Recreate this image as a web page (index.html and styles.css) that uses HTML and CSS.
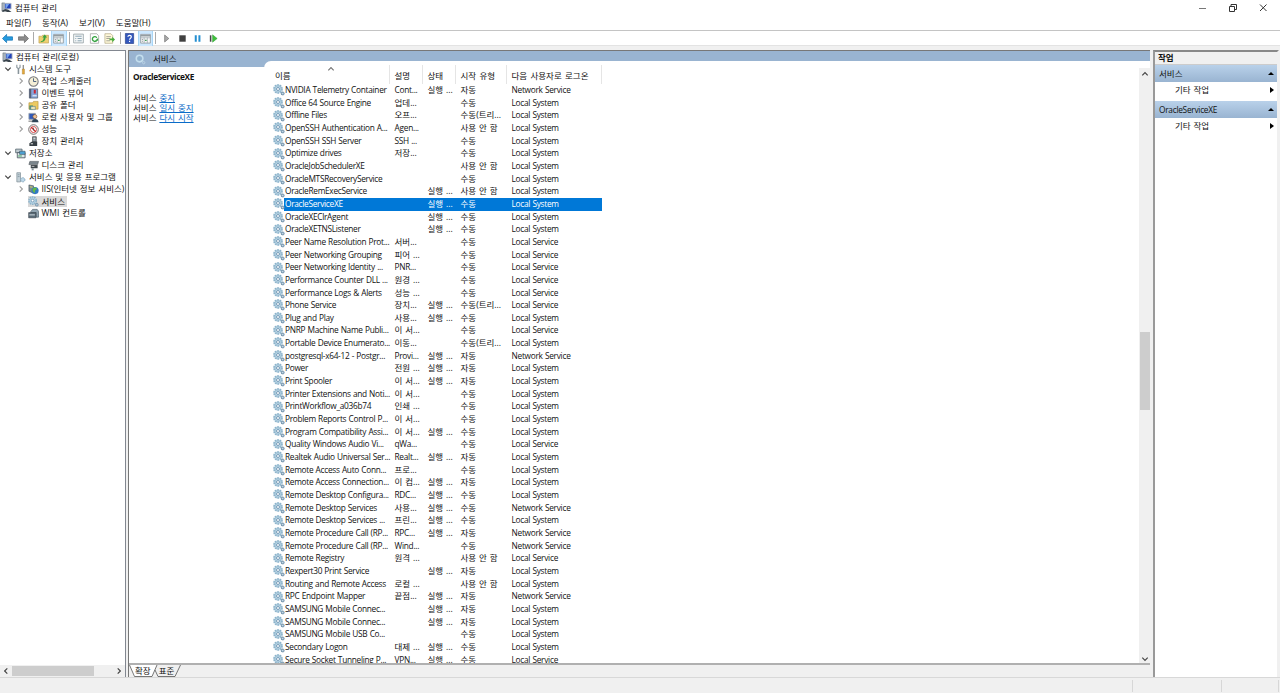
FILE: index.html
```html
<!DOCTYPE html>
<html lang="ko">
<head>
<meta charset="utf-8">
<title>컴퓨터 관리</title>
<link rel="stylesheet" href="styles.css">
</head>
<body>
<svg class="defs" width="0" height="0">
  <symbol id="gear" viewBox="0 0 12 12">
    <circle cx="5" cy="5" r="4" fill="#cfe6f3" stroke="#8cb3cb" stroke-width="1.700" stroke-dasharray="1.800 .7"/>
    <circle cx="5" cy="5" r="2.900" fill="#c8e2f0" stroke="#92b6cc" stroke-width=".7"/>
    <circle cx="5" cy="5" r="1.500" fill="#fff" stroke="#5f88a8" stroke-width=".8"/>
    <path d="M8 8h2.500v3H8z" fill="#9db8cb"/>
    <circle cx="9.700" cy="9.500" r="1.600" fill="#8fadc2" stroke="#6e8ca4" stroke-width=".9" stroke-dasharray="1 .5"/>
    <circle cx="9.700" cy="9.500" r=".6" fill="#d8e8f3"/>
  </symbol>
  <symbol id="gearlight" viewBox="0 0 12 12">
    <circle cx="5" cy="5" r="3.600" fill="none" stroke="#c3deed" stroke-width="1.700"/>
    <circle cx="5" cy="5" r="1.900" fill="#91b4ce"/>
    <circle cx="9.500" cy="9.500" r="1.300" fill="none" stroke="#bdd6e7" stroke-width=".9"/>
  </symbol>
  <symbol id="computer" viewBox="0 0 12 12">
    <path d="M1 1h3v9H1z" fill="#a8b3bb" stroke="#66727c" stroke-width=".6"/>
    <path d="M4 1.500h7v6H4z" fill="#2343b8" stroke="#b3bac2" stroke-width=".9"/>
    <path d="M5 2.300h4L6 6.500H5z" fill="#75a3ee"/>
    <path d="M1 9.500l4-2 3 1 3.500 2.500H7L4 10l-2 1z" fill="#39434c"/>
  </symbol>
  <symbol id="tools" viewBox="0 0 12 12">
    <path d="M2 .8v3l1.500 1.200v6M5.500 .8v3L4 5v6" fill="none" stroke="#88949b" stroke-width="1.200"/>
    <path d="M9 1v6" stroke="#777" stroke-width="1.200"/>
    <path d="M8 5.500h2.300V11H8z" fill="#e4a93c" stroke="#9b6d19" stroke-width=".4"/>
  </symbol>
  <symbol id="clock" viewBox="0 0 12 12">
    <circle cx="6" cy="6" r="5.100" fill="#f4eed5" stroke="#6f7278" stroke-width="1.100"/>
    <path d="M6 2.500V6h3" fill="none" stroke="#435b7c" stroke-width="1"/>
  </symbol>
  <symbol id="event" viewBox="0 0 12 12">
    <path d="M1.500 1h9v10h-9z" fill="#86a6dc" stroke="#53606e" stroke-width=".8"/>
    <path d="M1.500 1h2v10h-2z" fill="#595f72"/>
    <path d="M6.300 2H8.500v4H6.300z" fill="#c82936"/><path d="M5 8.500h4.500" stroke="#fff"/>
  </symbol>
  <symbol id="folder" viewBox="0 0 12 12">
    <path d="M1 3h4l1-1.500h5V10H1z" fill="#ecca61" stroke="#ad8731" stroke-width=".6"/>
    <path d="M1.500 6h4v4.500h-4z" fill="#3c8a72"/><path d="M3 7h5v3.500H3z" fill="#e9e2b4" stroke="#4c7b92" stroke-width=".6"/>
  </symbol>
  <symbol id="users" viewBox="0 0 12 12">
    <path d="M1 1.500h7v6.500H1z" fill="#3159b8" stroke="#9aa4b0"/>
    <circle cx="7.500" cy="5" r="2.200" fill="#edc398" stroke="#78451d" stroke-width=".6"/>
    <path d="M4 11.300c0-5 7.500-5 7.500 0z" fill="#2f4558"/><path d="M.5 10H5" stroke="#666"/>
  </symbol>
  <symbol id="noentry" viewBox="0 0 12 12">
    <circle cx="6" cy="6" r="5.200" fill="#fff" stroke="#5b5050" stroke-width=".9"/>
    <circle cx="6" cy="6" r="3.300" fill="none" stroke="#ce3d3d" stroke-width="1"/>
    <path d="M3.500 3.500l5 5" stroke="#c62626" stroke-width="1.300"/><path d="M6 4v3" stroke="#444" stroke-width=".8"/>
  </symbol>
  <symbol id="device" viewBox="0 0 12 12">
    <path d="M5 .8h4v5.500H5z" fill="#8a979f" stroke="#333" stroke-width=".7"/>
    <path d="M1.500 8l3-2H10v5H1.500z" fill="#353d42"/><path d="M3 8.500h2.500" stroke="#eee"/><path d="M6 2.500h2" stroke="#e8e8e8"/>
  </symbol>
  <symbol id="storage" viewBox="0 0 12 12">
    <path d="M.7 1.200h7v4h-7z" fill="#c0cbd0" stroke="#4c5d65" stroke-width=".8"/>
    <path d="M2.500 5H11v5.700H2.500z" fill="#dfe6e9" stroke="#46545c" stroke-width=".9"/>
    <path d="M5 3.500h6V7H5z" fill="#4fa3d4" stroke="#3b4b55" stroke-width=".6"/><path d="M3.500 8.700h4" stroke="#37a856"/>
  </symbol>
  <symbol id="disk" viewBox="0 0 12 12">
    <path d="M2 1.500h9.500l-1 3.500H1z" fill="#7a858c" stroke="#454d52" stroke-width=".6"/>
    <path d="M3 5.500h7.500V9H3z" fill="#3e464b"/><path d="M4 9h2.200v2.300H4z" fill="#8a959b"/><path d="M4 7h3" stroke="#ddd" stroke-width=".8"/>
  </symbol>
  <symbol id="apps" viewBox="0 0 12 12">
    <path d="M2 .8h4v10H2z" fill="#c3d0d7" stroke="#82919a" stroke-width=".8"/><path d="M3 3h2M3 5h2" stroke="#6d8390" stroke-width=".7"/>
    <circle cx="8.500" cy="8.500" r="2.300" fill="#bed8e9" stroke="#7ba0b9" stroke-width="1" stroke-dasharray="1.200 .5"/>
  </symbol>
  <symbol id="iis" viewBox="0 0 12 12">
    <path d="M1 1l5 1v8L1 8z" fill="#7d8c94" stroke="#39464d" stroke-width=".6"/>
    <circle cx="7.700" cy="7.200" r="3.900" fill="#3278c2"/><path d="M5 5l3-1.500 2 2-2 1-1 3.500-2-2.500z" fill="#65ba42"/><path d="M2 3l3 .5" stroke="#dfd95b"/>
  </symbol>
  <symbol id="wmi" viewBox="0 0 12 12">
    <path d="M3 4l2-2.500h5l1.500 2V10H9V5H3z" fill="#91a4b1" stroke="#445766" stroke-width=".7"/><path d="M.7 5h8v5.700h-8z" fill="#596b77" stroke="#333a44" stroke-width=".6"/>
    <path d="M1.500 7.500h6" stroke="#dce5eb"/>
  </symbol>
  <symbol id="left" viewBox="0 0 12 12"><path d="M.5 6L5 1.500v2.700h6.500v3.600H5v2.700z" fill="#249bdf" stroke="#1675b5" stroke-width=".8"/></symbol>
  <symbol id="right" viewBox="0 0 12 12"><path d="M11.500 6L7 1.500v2.700H.5v3.600H7v2.700z" fill="#8c8c8c" stroke="#6c6c6c" stroke-width=".8"/></symbol>
  <symbol id="up" viewBox="0 0 12 12"><path d="M1 3.500h3l1-1h6.500V11H1z" fill="#efcf72" stroke="#b29649" stroke-width=".6"/><path d="M3 9c2.200 0 3.200-1.500 3.200-4H4.700L7.300 1.500 10 5H8.300c0 3.500-2.300 5-5.300 5z" fill="#3aa341"/></symbol>
  <symbol id="panel" viewBox="0 0 12 12"><path d="M.7 1.500h10.600v9.500H.7z" fill="#f8f8f8" stroke="#858d92" stroke-width=".8"/><path d="M.7 3h10.600" stroke="#8c979c" stroke-width="1.500"/><path d="M.7 5.200h10.600M4.500 5v6M8 5v6" stroke="#9aa7ae" stroke-width=".8"/><path d="M2 7h1.300M2 9h1.300" stroke="#8c979c"/><path d="M5.500 8h1.700" stroke="#3b9b55" stroke-width="1.500"/></symbol>
  <symbol id="props" viewBox="0 0 12 12"><path d="M.7 1.200h10.600v9.600H.7z" fill="#f4f6f7" stroke="#8b989e" stroke-width=".8"/><path d="M2.500 3.500h7M2.500 6h1M5 6h4.500M2.500 8.500h1M5 8.500h4.500" stroke="#7795a5" stroke-width=".9"/></symbol>
  <symbol id="refresh" viewBox="0 0 12 12"><path d="M1.500 .8h7L10.500 3v8.200h-9z" fill="#fff" stroke="#929292" stroke-width=".7"/><path d="M8.500 5.200A2.600 2.600 0 1 0 8.500 8" fill="none" stroke="#35a340" stroke-width="1.500"/><path d="M6.500 8.500H10V5.500z" fill="#35a340"/></symbol>
  <symbol id="export" viewBox="0 0 12 12"><path d="M1 .8h6.500l2 2v8.400H1z" fill="#fff9d9" stroke="#aaa078" stroke-width=".7"/><path d="M2.500 4h5M2.500 6h4M2.500 8.500h4" stroke="#777" stroke-width=".7"/><path d="M6 6h3V4l3 3-3 3V8H6z" fill="#48ac3a"/></symbol>
  <symbol id="help" viewBox="0 0 12 12"><path d="M1.500 .5h9v11h-9z" fill="#3458bd" stroke="#223b85" stroke-width=".7"/><path d="M4.300 4.200c0-2.200 3.700-2.200 3.700 0 0 1.500-1.900 1.500-1.900 3.200M6.100 8.500v1.400" fill="none" stroke="#fff" stroke-width="1.300"/></symbol>
  <symbol id="play" viewBox="0 0 12 12"><path d="M4 2.200L8.500 6 4 9.800z" fill="#aaa" stroke="#777" stroke-width=".8"/></symbol>
  <symbol id="stop" viewBox="0 0 12 12"><path d="M2.500 2.500h7v7h-7z" fill="#404040"/></symbol>
  <symbol id="pause" viewBox="0 0 12 12"><path d="M3 2.500h2.200v7H3zM7 2.500h2.200v7H7z" fill="#258fd1"/></symbol>
  <symbol id="restart" viewBox="0 0 12 12"><path d="M2 2.500h1.700v7H2z" fill="#444"/><path d="M5 2L10 6 5 10z" fill="#3fc13c" stroke="#27962c" stroke-width=".5"/></symbol>
  <symbol id="chevron" viewBox="0 0 8 8"><path d="M1.300 2.700L4 5.400l2.700-2.700" fill="none" stroke="currentColor" stroke-width="1.200"/></symbol>
</svg>

<header class="titlebar">
  <svg class="i"><use href="#computer"/></svg><span class="title">컴퓨터 관리</span>
  <svg class="winbtns" width="80" height="14" viewBox="0 0 80 14"><path d="M6 7.500h7" stroke="#777"/><path d="M36.500 5.500h5v5h-5zM38 5V3.500h5.500v5H42" fill="none" stroke="#333"/><path d="M67 3.500l6.500 6.500M73.500 3.500L67 10" stroke="#333"/></svg>
</header>
<nav class="menubar"><span>파일(F)</span><span>동작(A)</span><span>보기(V)</span><span>도움말(H)</span></nav>
<div class="toolbar">
  <span class="b"><svg class="i"><use href="#left"/></svg></span>
  <span class="b"><svg class="i"><use href="#right"/></svg></span><i class="sep"></i>
  <span class="b"><svg class="i"><use href="#up"/></svg></span>
  <span class="b on"><svg class="i"><use href="#panel"/></svg></span><i class="sep"></i>
  <span class="b"><svg class="i"><use href="#props"/></svg></span>
  <span class="b"><svg class="i"><use href="#refresh"/></svg></span>
  <span class="b"><svg class="i"><use href="#export"/></svg></span><i class="sep"></i>
  <span class="b"><svg class="i"><use href="#help"/></svg></span>
  <span class="b on"><svg class="i"><use href="#panel"/></svg></span><i class="sep last"></i>
  <span class="b"><svg class="i"><use href="#play"/></svg></span>
  <span class="b"><svg class="i"><use href="#stop"/></svg></span>
  <span class="b"><svg class="i"><use href="#pause"/></svg></span>
  <span class="b"><svg class="i"><use href="#restart"/></svg></span>
</div>

<main class="work">
  <aside class="tree">
    <div class="nodes" id="tree"></div>
    <div class="hscroll"><svg class="c west"><use href="#chevron"/></svg><i class="hthumb"></i><svg class="c east"><use href="#chevron"/></svg></div>
  </aside>
  <section class="center">
    <div class="view">
      <div class="viewhead"><svg class="i"><use href="#gearlight"/></svg><span>서비스</span></div>
      <div class="viewbody">
        <div class="detail">
          <b>OracleServiceXE</b>
          <p>서비스 <a>중지</a></p><p>서비스 <a>일시 중지</a></p><p>서비스 <a>다시 시작</a></p>
        </div>
        <div class="list">
          <div class="row head"><span>이름</span><span>설명</span><span>상태</span><span>시작 유형</span><span>다음 사용자로 로그온</span><svg class="c sort"><use href="#chevron"/></svg></div>
          <div id="rows"></div>
        </div>
        <div class="vscroll"><svg class="c north"><use href="#chevron"/></svg><i class="vthumb"></i><svg class="c south"><use href="#chevron"/></svg></div>
      </div>
    </div>
    <div class="tabs">
      <svg class="tabshape" width="56" height="13" viewBox="0 0 56 13"><path d="M0 0l5 11.500h18L28 0z" fill="#fff"/><path d="M.5 0l5 11.500H23L28 0M26 5l3 6.500h17L51.500 0" fill="none" stroke="#555" stroke-width=".8"/></svg>
      <span>확장</span><span>표준</span>
    </div>
  </section>
  <aside class="actions">
    <div class="atitle">작업</div>
    <div class="agroup"><span>서비스</span><i class="tri-up"></i></div>
    <div class="aitem"><span>기타 작업</span><i class="tri-right"></i></div>
    <div class="agroup"><span class="latin">OracleServiceXE</span><i class="tri-up"></i></div>
    <div class="aitem"><span>기타 작업</span><i class="tri-right"></i></div>
  </aside>
</main>
<footer class="status"><i></i><i></i><i></i></footer>
<script src="app.js"></script>
</body>
</html>
```
FILE: styles.css
```css
* { box-sizing: border-box; }
body { margin: 0; width: 1280px; height: 693px; overflow: hidden; display: flex; flex-direction: column; background: #f0f0f0; color: #111; font: 8.5px/12px "Open Sans", "Noto Sans CJK KR", sans-serif; word-spacing: .7px; white-space: nowrap; }
.defs { position: absolute; }
.i { width: 11px; height: 11px; flex: none; display: block; }
.c { width: 8px; height: 8px; display: block; flex: none; color: #444; }
.titlebar { height: 15px; background: #fff; display: flex; align-items: center; padding-left: 1px; gap: 3px; }
.winbtns { margin-left: auto; margin-right: 7px; }
.menubar { height: 15px; background: #fff; display: flex; align-items: center; padding-left: 6px; gap: 11px; }
.toolbar { height: 16px; background: #fff; border-top: 1px solid #c4c4c4; border-bottom: 1px solid #e3e3e3; display: flex; align-items: center; }
.b { width: 15.5px; height: 15px; display: flex; align-items: center; justify-content: center; }
.on { background: #cce8ff; border: 1px solid #a8d5f5; border-width: 0 1px; }
.sep { width: 1px; height: 12px; background: #aaa; margin: 0 1.5px 0 2px; }
.sep.last { margin-right: 3px; }
.work { height: 632px; display: flex; padding-top: 4px; border-bottom: 1px solid #d8d8d8; }
.tree { width: 126px; height: 627px; background: #fff; border-top: 1px solid #828790; border-right: 1px solid #828790; display: flex; flex-direction: column; overflow: hidden; }
.nodes { flex: 1; }
.node { height: 12px; display: flex; align-items: center; }
.node .tw { width: 10px; margin-right: 2px; flex: none; display: flex; justify-content: center; }
.node .i { margin-right: 1px; }
.node .t { padding: 0 2px 0 2px; line-height: 12px; }
.node.sel .t { line-height: 11px; padding-left: 3px; }
.node.sel .t, .node.sel .i { background: #d9d9d9; }
.node.sel .i { margin-right: 0; }
.l0 { padding-left: 2px; }
.l1 { padding-left: 3px; }
.l2 { padding-left: 15.5px; }
.node .closed { transform: rotate(-90deg); color: #a0a0a0; }
.hscroll { height: 12px; background: #f0f0f0; display: flex; align-items: center; padding: 0 2px; }
.hthumb { width: 82px; height: 10px; background: #cdcdcd; margin-left: 2px; }
.west { transform: rotate(90deg); }
.east { transform: rotate(-90deg); margin-left: auto; }
.center { width: 1024px; margin-left: 2px; height: 627px; border-left: 1px solid #777; display: flex; flex-direction: column; }
.view { height: 615px; border-top: 1px solid #777; border-bottom: 2px solid #b0b0b0; background: #fff; margin-right: 2px; display: flex; flex-direction: column; overflow: hidden; }
.viewhead { height: 16px; flex: none; background: #99b4d1; display: flex; align-items: center; padding-left: 6px; gap: 7px; }
.viewbody { flex: 1; min-height: 0; display: flex; }
.detail { width: 135px; padding: 3.5px 4px; line-height: 10px; }
.detail b { display: block; height: 22px; line-height: 12px; font-size: 8.300px; letter-spacing: -.4px; }
.detail p { margin: 0; }
.detail a { color: #0a6cc8; text-decoration: underline; }
.list { flex: 1; min-width: 0; margin-top: -6px; background: #fff; border-top-left-radius: 7px; padding-left: 8px; overflow: hidden; }
.row { width: 330px; height: 12.66px; display: grid; grid-template-columns: 118px 33px 33px 51px 95px; line-height: 12.66px; }
.row > span { padding-left: 4.5px; white-space: pre; }
.row > .latin, .latin { font-size: 8.3px; letter-spacing: -.26px; word-spacing: .3px; }
.row > .name { display: flex; align-items: center; padding-left: 1px; font-size: 8.3px; letter-spacing: -.29px; word-spacing: .4px; }
.name .i { width: 12px; height: 12px; }
.row.head { height: 23px; position: relative; }
.row.head span { border-right: 1px solid #e5e5e5; height: 19px; margin-top: 4px; line-height: 21px; padding-left: 4.5px; word-spacing: 1.1px; }
.row.head span:first-child { padding-left: 3px; }
.sort { position: absolute; left: 55px; top: 4px; transform: rotate(180deg); color: #777; }
.row.sel { background: linear-gradient(#0078d7, #0078d7) 12px 0 no-repeat; color: #fff; }
.vscroll { width: 11px; margin-top: -6px; border-top: 7px solid #fff; background: #f0f0f0; display: flex; flex-direction: column; align-items: center; padding: 2px 0 0; }
.vthumb { width: 10px; height: 78px; flex: none; background: #cdcdcd; margin-top: 254px; }
.north { transform: rotate(180deg); }
.south { margin-top: auto; }
.tabs { height: 12px; position: relative; display: flex; padding-left: 6px; gap: 8px; line-height: 12px; }
.tabs span { position: relative; }
.tabshape { position: absolute; left: 0; top: 0; }
.actions { width: 126px; margin-left: 1px; background: #fff; border-left: 2px solid #999; border-top: 2px solid #888; border-right: 2px solid #f0f0f0; height: 627px; }
.atitle { height: 13px; background: #f0f0f0; font-weight: bold; padding-left: 3px; line-height: 12px; border-bottom: 1px solid #ccc; }
.agroup { height: 17px; background: linear-gradient(#b9d1ea, #99b4d1); display: flex; align-items: center; padding: 0 3px 0 4px; }
.aitem { height: 19px; display: flex; align-items: center; padding: 0 3px 3px 20px; }
.tri-up { margin-left: auto; border: 3px solid transparent; border-top: 0; border-bottom: 3px solid #000; }
.tri-right { margin-left: auto; border: 3px solid transparent; border-right: 0; border-left: 4px solid #000; }
.status { height: 15px; display: flex; justify-content: flex-end; padding-top: 2px; padding-right: 1px; }
.status i { width: 89px; height: 12px; border-right: 1px solid #d7d7d7; }
.status i:last-child { width: 57px; }
```
FILE: app.js
```js
const nodes = [
  [0, "", "computer", "컴퓨터 관리(로컬)"], [1, "o", "tools", "시스템 도구"], [2, "c", "clock", "작업 스케줄러"],
  [2, "c", "event", "이벤트 뷰어"], [2, "c", "folder", "공유 폴더"], [2, "c", "users", "로컬 사용자 및 그룹"],
  [2, "c", "noentry", "성능"], [2, "", "device", "장치 관리자"], [1, "o", "storage", "저장소"],
  [2, "", "disk", "디스크 관리"], [1, "o", "apps", "서비스 및 응용 프로그램"], [2, "c", "iis", "IIS(인터넷 정보 서비스)"],
  [2, "", "gear", "서비스", 1], [2, "", "wmi", "WMI 컨트롤"]
];
document.getElementById("tree").innerHTML = nodes.map(([lv, st, ic, t, sel]) =>
  `<div class="node l${lv}${sel ? " sel" : ""}">` +
  (lv ? `<span class="tw">${st ? `<svg class="c ${st === "c" ? "closed" : ""}"><use href="#chevron"/></svg>` : ""}</span>` : "") +
  `<svg class="i"><use href="#${ic}"/></svg><span class="t">${t}</span></div>`).join("");

// name | description | running | start type | log on as (S: Local System, L: Local Service, N: Network Service)
const data = `NVIDIA Telemetry Container|Cont...|1|자동|N
Office 64 Source Engine|업데...||수동|S
Offline Files|오프...||수동(트리...|S
OpenSSH Authentication A...|Agen...||사용 안 함|S
OpenSSH SSH Server|SSH ...||수동|S
Optimize drives|저장...||수동|S
OracleJobSchedulerXE|||사용 안 함|S
OracleMTSRecoveryService|||수동|S
OracleRemExecService||1|사용 안 함|S
OracleServiceXE||1|수동|S
OracleXEClrAgent||1|수동|S
OracleXETNSListener||1|수동|S
Peer Name Resolution Prot...|서버...||수동|L
Peer Networking Grouping|피어 ...||수동|L
Peer Networking Identity ...|PNR...||수동|L
Performance Counter DLL ...|원경 ...||수동|L
Performance Logs & Alerts|성능 ...||수동|L
Phone Service|장치...|1|수동(트리...|L
Plug and Play|사용...|1|수동|S
PNRP Machine Name Publi...|이 서...||수동|L
Portable Device Enumerato...|이동...||수동(트리...|S
postgresql-x64-12 - Postgr...|Provi...|1|자동|N
Power|전원 ...|1|자동|S
Print Spooler|이 서...|1|자동|S
Printer Extensions and Noti...|이 서...||수동|S
PrintWorkflow_a036b74|인쇄 ...||수동|S
Problem Reports Control P...|이 서...||수동|S
Program Compatibility Assi...|이 서...|1|수동|S
Quality Windows Audio Vi...|qWa...||수동|L
Realtek Audio Universal Ser...|Realt...|1|자동|S
Remote Access Auto Conn...|프로...||수동|S
Remote Access Connection...|이 컴...|1|자동|S
Remote Desktop Configura...|RDC...|1|수동|S
Remote Desktop Services|사용...|1|수동|N
Remote Desktop Services ...|프린...|1|수동|S
Remote Procedure Call (RP...|RPC...|1|자동|N
Remote Procedure Call (RP...|Wind...||수동|N
Remote Registry|원격 ...||사용 안 함|L
Rexpert30 Print Service||1|자동|S
Routing and Remote Access|로컬 ...||사용 안 함|S
RPC Endpoint Mapper|끝점...|1|자동|N
SAMSUNG Mobile Connec...||1|자동|S
SAMSUNG Mobile Connec...||1|자동|S
SAMSUNG Mobile USB Co...|||수동|S
Secondary Logon|대제 ...|1|수동|S
Secure Socket Tunneling P...|VPN...|1|수동|L`;
const who = { S: "Local System", L: "Local Service", N: "Network Service" };
document.getElementById("rows").innerHTML = data.split("\n").map(line => {
  const [n, d, r, s, w] = line.split("|");
  return `<div class="row${n === "OracleServiceXE" ? " sel" : ""}"><span class="name"><svg class="i"><use href="#gear"/></svg>${n.replace("&", "&amp;")}</span>` +
    `<span${/^[A-Za-z]/.test(d) ? ' class="latin"' : ""}>${d}</span><span>${r ? "실행 ..." : ""}</span><span>${s}</span><span class="latin">${who[w]}</span></div>`;
}).join("");
```
